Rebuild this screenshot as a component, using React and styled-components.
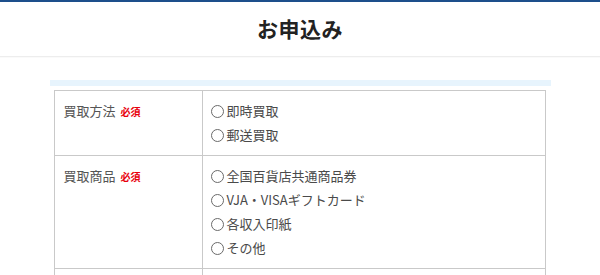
import React from "react";
import styled, { createGlobalStyle } from "styled-components";

const Global = createGlobalStyle`
  html, body { margin: 0; padding: 0; background: #fff; }
  body {
    font-family: "Noto Sans CJK JP", "Noto Sans", sans-serif;
    color: #4a4a4a;
  }
`;

const Page = styled.div`
  border-top: 2px solid #1d4f8b;
`;

const Header = styled.header`
  height: 54px;
  display: flex;
  align-items: center;
  justify-content: center;
  border-bottom: 1px solid #ededed;
  box-shadow: 0 1px 1px rgba(0, 0, 0, 0.02);
`;

const Title = styled.h1`
  margin: 0 0 2px;
  font-size: 21px;
  font-weight: 700;
  color: #222;
  letter-spacing: 0.5px;
`;

const Main = styled.main`
  padding-top: 23px;
`;

const Section = styled.section`
  width: 492px;
  margin: 0 auto;
  border-top: 6px solid #e7f4fd;
  padding: 4px 5px 0 4px;
`;

const Table = styled.table`
  width: 100%;
  border-collapse: collapse;
  border: 1px solid #c9c9c9;
`;

const Row = styled.tr`
  border-bottom: 1px solid #c9c9c9;
`;

const Th = styled.th`
  width: 129px;
  padding: 8px 9px;
  border-right: 1px solid #c9c9c9;
  text-align: left;
  vertical-align: top;
  font-weight: 400;
  font-size: 13px;
  line-height: 24px;
  color: #555;
`;

const Td = styled.td`
  padding: 8px 9px 8px 8px;
  vertical-align: top;
  font-size: 13px;
  line-height: 24px;
  color: #4a4a4a;
`;

const Required = styled.span`
  margin-left: 5px;
  font-size: 10px;
  font-weight: 700;
  color: #e8000b;
`;

const Option = styled.label`
  display: flex;
  align-items: center;
  height: 24px;
`;

const Circle = styled.span`
  display: inline-block;
  box-sizing: border-box;
  width: 13px;
  height: 13px;
  margin: 0 3px 0 0;
  border: 1px solid #6a6a6a;
  border-radius: 50%;
`;

const rows = [
  { label: "買取方法", req: true, options: ["即時買取", "郵送買取"] },
  {
    label: "買取商品",
    req: true,
    options: ["全国百貨店共通商品券", "VJA・VISAギフトカード", "各収入印紙", "その他"],
  },
  { label: "", req: false, options: [] },
];

export default function App() {
  return (
    <>
      <Global />
      <Page>
        <Header>
          <Title>お申込み</Title>
        </Header>
        <Main>
          <Section>
            <Table>
              <tbody>
                {rows.map((r, idx) => (
                  <Row key={idx}>
                    <Th>
                      {r.label}
                      {r.req && <Required>必須</Required>}
                    </Th>
                    <Td>
                      {r.options.length === 0 ? (
                        <Option />
                      ) : (
                        r.options.map((o) => (
                          <Option key={o}>
                            <Circle />
                            {o}
                          </Option>
                        ))
                      )}
                    </Td>
                  </Row>
                ))}
              </tbody>
            </Table>
          </Section>
        </Main>
      </Page>
    </>
  );
}
